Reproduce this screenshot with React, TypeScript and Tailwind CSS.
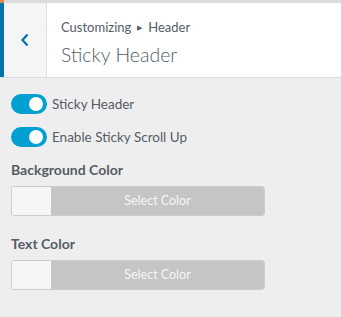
import React from "react";

function Toggle({ label }: { label: string }) {
    return (
        <label className="flex items-center gap-[5px] h-[20px]">
            <span className="relative w-[36px] h-[20px] rounded-full bg-[#00a0d2] shrink-0">
                <span className="absolute right-[4px] top-[3px] w-[14px] h-[14px] rounded-full bg-white" />
            </span>
            <span className="text-[13.5px] text-[#555d66]">{label}</span>
        </label>
    );
}

function ColorField({ label }: { label: string }) {
    return (
        <div>
            <div className="text-[14px] font-bold text-[#555d66] leading-[20px]">{label}</div>
            <div className="mt-[6px] flex w-[254px] h-[30px] rounded-[3px] border border-[#ccc] overflow-hidden">
                <div className="w-[39px] bg-[#f5f6f6]" />
                <div className="flex-1 bg-[#c4c5c4] flex items-center justify-center text-[12.5px] text-[#f7f7f7]">
                    Select Color
                </div>
            </div>
        </div>
    );
}

export default function App() {
    return (
        <main className="w-[341px] h-[317px] bg-[#eeeeee] overflow-hidden" style={{ fontFamily: 'Lato, "Open Sans", sans-serif' }}>
            <div className="flex h-[3px] bg-[#dcdcdc]">
                <div className="w-[4px] bg-[#d98b4e]" />
            </div>
            <header className="flex h-[75px] bg-white border-b border-[#dddddd]">
                <button className="w-[47px] shrink-0 bg-[#f4f5f5] border-l-4 border-[#0073aa] border-r border-r-[#dddddd] flex items-center justify-center">
                    <svg width="10" height="14" viewBox="0 0 10 14" fill="none">
                        <path d="M7.5 1.5 L2.5 7 L7.5 12.5" stroke="#0073aa" strokeWidth="2.2" />
                    </svg>
                </button>
                <div className="pl-[14px] pt-[14px]">
                    <div className="text-[13px] text-[#555d66] leading-[20px] flex items-center gap-[6px]">
                        <span>Customizing</span>
                        <span className="text-[7px]">▶</span>
                        <span>Header</span>
                    </div>
                    <div className="text-[19.5px] font-light text-[#555d66] leading-[28px] mt-[4px]">Sticky Header</div>
                </div>
            </header>
            <section className="px-[11px] pt-[16px] flex flex-col">
                <div className="flex flex-col gap-[13px]">
                    <Toggle label="Sticky Header" />
                    <Toggle label="Enable Sticky Scroll Up" />
                </div>
                <div className="mt-[13px] flex flex-col gap-[18px]">
                    <ColorField label="Background Color" />
                    <ColorField label="Text Color" />
                </div>
            </section>
        </main>
    );
}
